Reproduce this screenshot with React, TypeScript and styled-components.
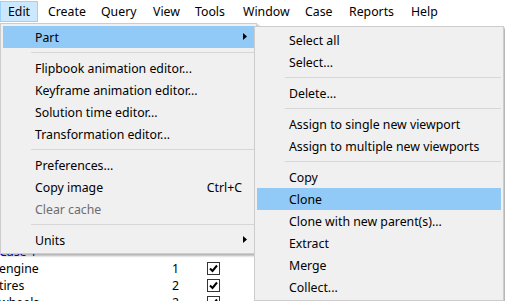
import styled, {createGlobalStyle, css} from 'styled-components';

const GlobalStyle = createGlobalStyle`
  html, body {
    margin: 0;
    padding: 0;
    background: #ffffff;
  }
  body {
    font-family: "Noto Sans", "Liberation Sans", sans-serif;
    font-size: 12.3px;
    color: #000000;
  }
`;

type Entry =
  | {kind: 'item'; label: string; shortcut?: string; sub?: boolean; disabled?: boolean; active?: boolean}
  | {kind: 'sep'};

const barItems = [
  {label: 'Edit', width: 38, active: true},
  {label: 'Create', width: 53},
  {label: 'Query', width: 52},
  {label: 'View', width: 42},
  {label: 'Tools', width: 48},
  {label: 'Window', width: 62},
  {label: 'Case', width: 44},
  {label: 'Reports', width: 62},
  {label: 'Help', width: 44},
];

const editMenu: Entry[] = [
  {kind: 'item', label: 'Part', sub: true, active: true},
  {kind: 'sep'},
  {kind: 'item', label: 'Flipbook animation editor...'},
  {kind: 'item', label: 'Keyframe animation editor...'},
  {kind: 'item', label: 'Solution time editor...'},
  {kind: 'item', label: 'Transformation editor...'},
  {kind: 'sep'},
  {kind: 'item', label: 'Preferences...'},
  {kind: 'item', label: 'Copy image', shortcut: 'Ctrl+C'},
  {kind: 'item', label: 'Clear cache', disabled: true},
  {kind: 'sep'},
  {kind: 'item', label: 'Units', sub: true},
];

const partMenu: Entry[] = [
  {kind: 'item', label: 'Select all'},
  {kind: 'item', label: 'Select...'},
  {kind: 'sep'},
  {kind: 'item', label: 'Delete...'},
  {kind: 'sep'},
  {kind: 'item', label: 'Assign to single new viewport'},
  {kind: 'item', label: 'Assign to multiple new viewports'},
  {kind: 'sep'},
  {kind: 'item', label: 'Copy'},
  {kind: 'item', label: 'Clone', active: true},
  {kind: 'item', label: 'Clone with new parent(s)...'},
  {kind: 'item', label: 'Extract'},
  {kind: 'item', label: 'Merge'},
  {kind: 'item', label: 'Collect...'},
];

// the part list is scrolled to its end; the menus cover the rest
const parts = [
  {name: 'Case 1', count: '', checked: false, blue: true},
  {name: 'engine', count: '1', checked: true},
  {name: 'tires', count: '2', checked: true},
  {name: 'wheels', count: '2', checked: true},
];

export default function App() {
  return (
    <>
      <GlobalStyle />
      <Page>
        <MenuBar>
          {barItems.map(b => (
            <BarItem key={b.label} $w={b.width} $active={!!b.active}>{b.label}</BarItem>
          ))}
        </MenuBar>

        <PartList>
          {parts.map(p => (
            <Row key={p.name}>
              <Name $blue={!!p.blue}>{p.name}</Name>
              <Count>{p.count}</Count>
              {p.count && (
                <Check>
                  {p.checked && (
                    <svg width="9" height="9" viewBox="0 0 9 9">
                      <path d="M1 4.5 L3.5 7 L8 1.5" fill="none" stroke="#000" strokeWidth="2" />
                    </svg>
                  )}
                </Check>
              )}
            </Row>
          ))}
        </PartList>

        <EditDropdown>
          <MenuEntries entries={editMenu} />
        </EditDropdown>

        <PartDropdown>
          <MenuEntries entries={partMenu} />
        </PartDropdown>
      </Page>
    </>
  );
}

function MenuEntries({entries}: {entries: Entry[]}) {
  return (
    <>
      {entries.map((e, i) =>
        e.kind === 'sep' ? (
          <Separator key={i} />
        ) : (
          <Item key={i} $active={!!e.active} $disabled={!!e.disabled}>
            <Label>{e.label}</Label>
            {e.shortcut && <Shortcut>{e.shortcut}</Shortcut>}
            {e.sub && (
              <Arrow width="4" height="7" viewBox="0 0 4 7">
                <path d="M0 0 L4 3.5 L0 7 Z" fill="#000" />
              </Arrow>
            )}
          </Item>
        )
      )}
    </>
  );
}

const Page = styled.div`
  position: relative;
  width: 505px;
  height: 301px;
  overflow: hidden;
  background: #ffffff;
`;

const MenuBar = styled.div`
  display: flex;
  height: 22px;
  background: #ffffff;
`;

const BarItem = styled.div<{$w: number; $active: boolean}>`
  box-sizing: border-box;
  width: ${p => p.$w}px;
  height: 21px;
  margin-top: 1px;
  padding-left: 8px;
  display: flex;
  align-items: center;
  white-space: nowrap;
  border: 1px solid transparent;
  ${p => p.$active && css`
    margin-right: 1px;
    background: #cce8ff;
    border-color: #99d1ff;
    padding-left: 7px;
  `}
`;

const PartList = styled.div`
  display: flex;
  flex-direction: column;
  justify-content: flex-end;
  height: 289px;
`;

const Row = styled.div`
  display: grid;
  grid-template-columns: 172px 35px 13px;
  align-items: center;
  height: 17px;
  flex-shrink: 0;
`;

const Name = styled.div<{$blue: boolean}>`
  margin-left: -1px;
  color: ${p => (p.$blue ? '#0000ff' : '#000000')};
  white-space: nowrap;
`;

const Count = styled.div``;

const Check = styled.div`
  box-sizing: border-box;
  width: 13px;
  height: 13px;
  border: 1px solid #333333;
  background: #ffffff;
  display: flex;
  align-items: center;
  justify-content: center;
`;

const Dropdown = styled.div`
  position: absolute;
  box-sizing: border-box;
  display: flex;
  flex-direction: column;
  padding: 2px;
  background: #f0f0f0;
  border: 1px solid #cccccc;
  box-shadow: 2px 2px 2px rgba(0, 0, 0, 0.3);
`;

const EditDropdown = styled(Dropdown)`
  left: 0;
  top: 23px;
  width: 257px;
`;

const PartDropdown = styled(Dropdown)`
  left: 254px;
  top: 26px;
  width: 250px;
`;

const Item = styled.div<{$active: boolean; $disabled: boolean}>`
  position: relative;
  display: flex;
  align-items: center;
  height: 22px;
  padding: 0 12px 0 32px;
  white-space: nowrap;
  background: ${p => (p.$active ? '#91c9f7' : 'transparent')};
  color: ${p => (p.$disabled ? '#6d6d6d' : '#000000')};
`;

const Label = styled.span`
  flex: 1;
`;

const Shortcut = styled.span``;

const Arrow = styled.svg`
  position: absolute;
  right: 7px;
  top: 7px;
`;

const Separator = styled.div`
  height: 9px;
  margin-left: 28px;
  display: flex;
  align-items: center;

  &::after {
    content: '';
    flex: 1;
    height: 1px;
    background: #d7d7d7;
  }
`;
